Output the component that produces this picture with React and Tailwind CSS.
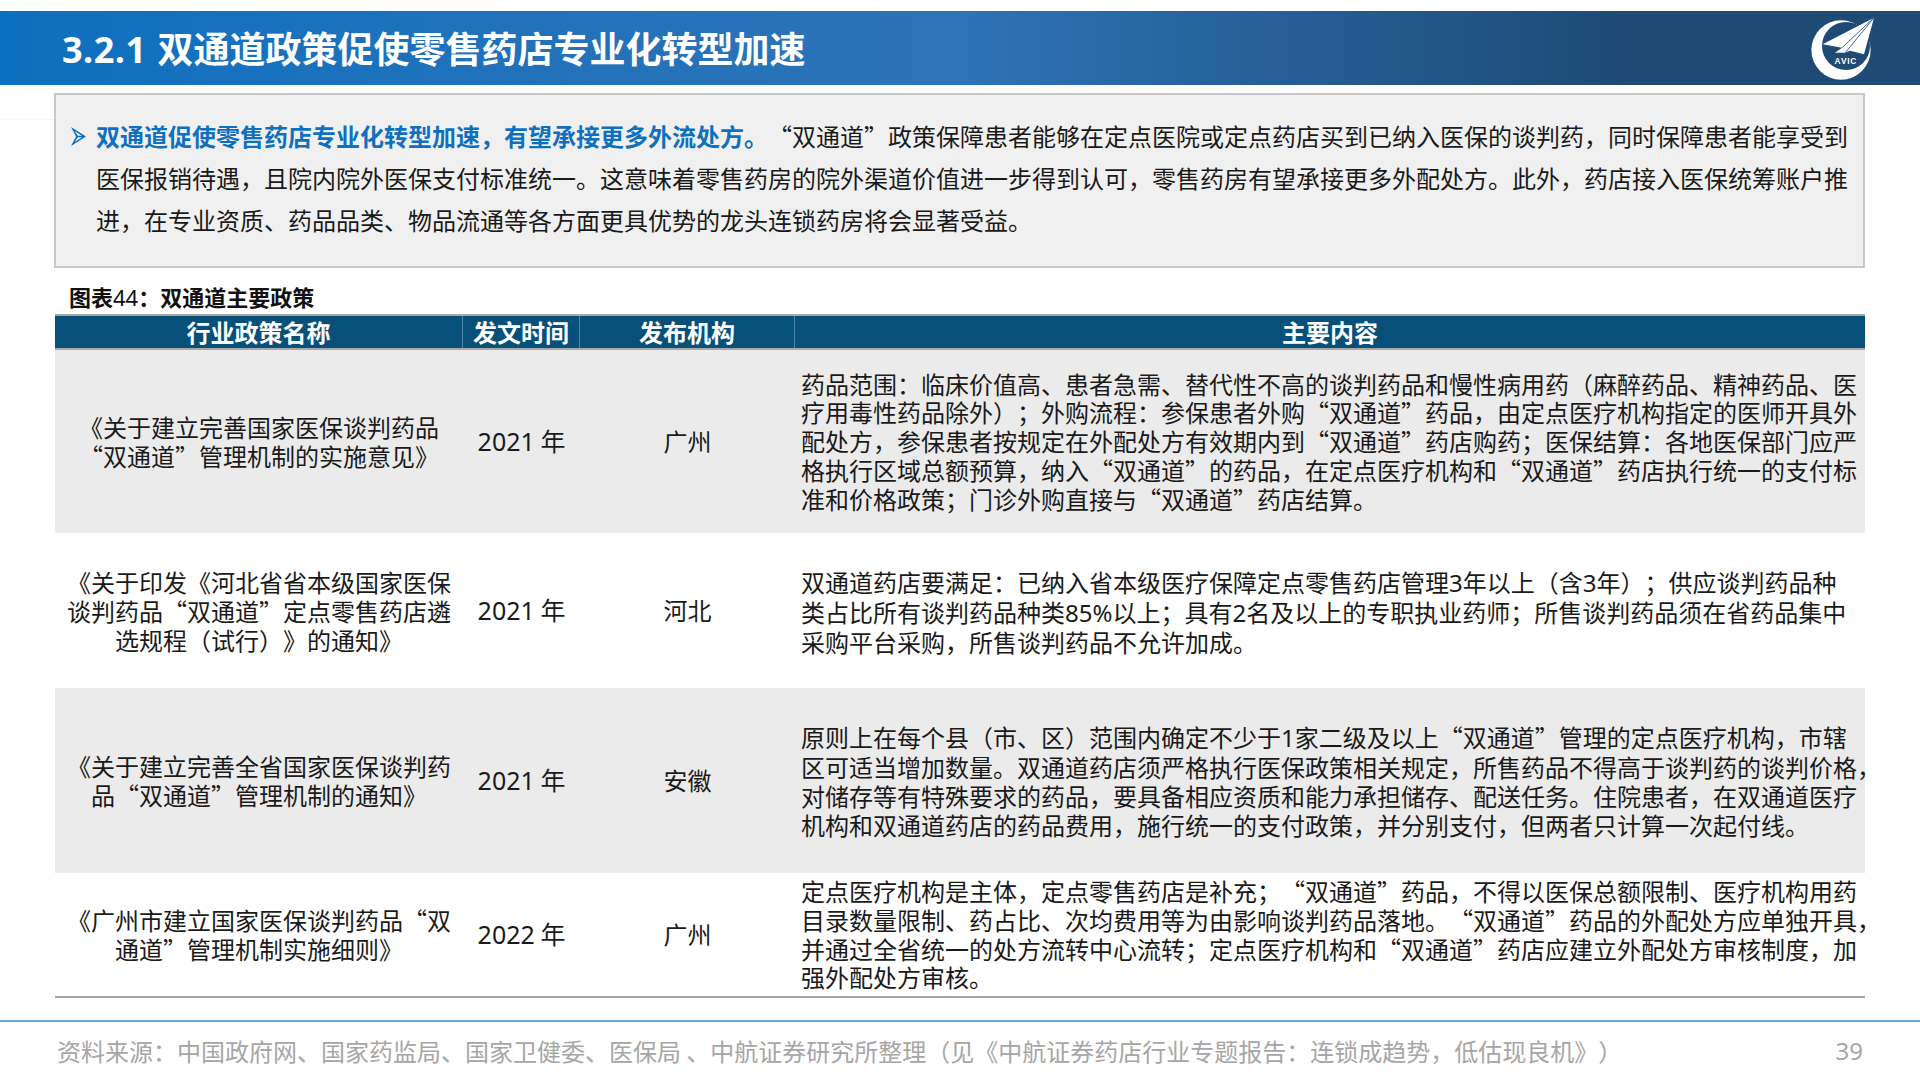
import React from 'react'

const rows = [
  {
    name: ['《关于建立完善国家医保谈判药品', '“双通道”管理机制的实施意见》'],
    nameClass: 'pb-[1px]',
    contentClass: '',
    year: '2021 年',
    org: '广州',
    height: 'h-[183px] bg-[#ebebeb]',
    content: [
      '药品范围：临床价值高、患者急需、替代性不高的谈判药品和慢性病用药（麻醉药品、精神药品、医',
      '疗用毒性药品除外）；外购流程：参保患者外购“双通道”药品，由定点医疗机构指定的医师开具外',
      '配处方，参保患者按规定在外配处方有效期内到“双通道”药店购药；医保结算：各地医保部门应严',
      '格执行区域总额预算，纳入“双通道”的药品，在定点医疗机构和“双通道”药店执行统一的支付标',
      '准和价格政策；门诊外购直接与“双通道”药店结算。',
    ],
  },
  {
    name: ['《关于印发《河北省省本级国家医保', '谈判药品“双通道”定点零售药店遴', '选规程（试行）》的通知》'],
    nameClass: '',
    contentClass: 'pt-[4px]',
    year: '2021 年',
    org: '河北',
    height: 'h-[155px] bg-white',
    content: [
      '双通道药店要满足：已纳入省本级医疗保障定点零售药店管理3年以上（含3年）；供应谈判药品种',
      '类占比所有谈判药品种类85%以上；具有2名及以上的专职执业药师；所售谈判药品须在省药品集中',
      '采购平台采购，所售谈判药品不允许加成。',
    ],
  },
  {
    name: ['《关于建立完善全省国家医保谈判药', '品“双通道”管理机制的通知》'],
    nameClass: 'pb-[1px]',
    contentClass: 'pt-[2px]',
    year: '2021 年',
    org: '安徽',
    height: 'h-[185px] bg-[#ebebeb]',
    content: [
      '原则上在每个县（市、区）范围内确定不少于1家二级及以上“双通道”管理的定点医疗机构，市辖',
      '区可适当增加数量。双通道药店须严格执行医保政策相关规定，所售药品不得高于谈判药的谈判价格，',
      '对储存等有特殊要求的药品，要具备相应资质和能力承担储存、配送任务。住院患者，在双通道医疗',
      '机构和双通道药店的药品费用，施行统一的支付政策，并分别支付，但两者只计算一次起付线。',
    ],
  },
  {
    name: ['《广州市建立国家医保谈判药品“双', '通道”管理机制实施细则》'],
    nameClass: 'pb-[1px]',
    contentClass: '',
    year: '2022 年',
    org: '广州',
    height: 'h-[125px] bg-white border-b-2 border-[#a6a6a6]',
    content: [
      '定点医疗机构是主体，定点零售药店是补充；“双通道”药品，不得以医保总额限制、医疗机构用药',
      '目录数量限制、药占比、次均费用等为由影响谈判药品落地。“双通道”药品的外配处方应单独开具，',
      '并通过全省统一的处方流转中心流转；定点医疗机构和“双通道”药店应建立外配处方审核制度，加',
      '强外配处方审核。',
    ],
  },
]

const columns = 'grid grid-cols-[408px_117px_215px_1070px]'

// latin digits sit in Noto Sans, the CJK font has narrower ones
const Mixed = ({ text }) =>
  text.split(/([0-9.%]+)/).map((part, i) =>
    /[0-9]/.test(part) ? (
      <span key={i} className="font-['Noto_Sans']">{part}</span>
    ) : (
      part
    )
  )

const Logo = () => (
  <svg viewBox="930 45 195 195" className="mr-[45px] h-[65px] w-[65px] shrink-0">
    <circle cx="1023" cy="147" r="89" fill="#fff" />
    <circle cx="1038" cy="135" r="72" fill="#1e4a74" />
    <path d="M1122 50 L968 130 L1026 140 L1005 155 L1035 155 L1050 149 L1092 160 Z" fill="#fff" />
    <path d="M1122 50 L1026 140 M1122 50 L1036 155" stroke="#1e4a74" strokeWidth="2.5" fill="none" />
    <text x="1037" y="189" textAnchor="middle" fontSize="25" fontWeight="700" letterSpacing="2" fill="#fff" fontFamily="Liberation Sans, sans-serif">
      AVIC
    </text>
  </svg>
)

const Bullet = () => (
  <svg viewBox="0 0 15 19" className="h-[19px] w-[15px] shrink-0">
    <path d="M0 0 L15 9.5 L0 19 L5 9.5 Z M3.6 4 L6.8 8.8 L11 8.8 Z M3.6 15 L6.8 10.2 L11 10.2 Z" fill="#0f70bf" fillRule="evenodd" />
  </svg>
)

export default function App() {
  return (
    <div className="flex h-[1080px] w-[1920px] flex-col overflow-hidden bg-white pt-[11px] font-['Noto_Sans_CJK_SC','Noto_Sans',sans-serif] text-[24px] leading-[29px] text-[#1a1a1a] [text-spacing-trim:space-all] [font-kerning:none]">
      {/* Title bar */}
      <div className="flex h-[74px] items-center justify-between bg-linear-to-r from-[#0b70bf] via-[#2d73b7] via-50% to-[#1e4a74] to-85% pl-[62px]">
        <h1 className="text-[36px] font-bold leading-[44px] whitespace-nowrap text-white">
          <span className="mr-[1px] font-['Noto_Sans'] tracking-[0.5px]">3.2.1 </span>双通道政策促使零售药店专业化转型加速
        </h1>
        <Logo />
      </div>

      {/* Summary box */}
      <div className="mt-[8px] flex">
        <div className="mt-[26px] h-px w-[54px] bg-[#f3f5fc]" />
        <div className="flex h-[175px] w-[1811px] flex-col justify-center border-2 border-[#c8c8c8] bg-[#f0f0f0] pr-2 pb-[5px] pl-[15px] leading-[41.8px]">
          <div className="flex items-center gap-[10px] whitespace-nowrap">
            <Bullet />
            <div>
              <span className="font-bold text-[#0f70bf]">双通道促使零售药店专业化转型加速，有望承接更多外流处方。</span>
              “双通道”政策保障患者能够在定点医院或定点药店买到已纳入医保的谈判药，同时保障患者能享受到
            </div>
          </div>
          <div className="pl-[25px] whitespace-nowrap">医保报销待遇，且院内院外医保支付标准统一。这意味着零售药房的院外渠道价值进一步得到认可，零售药房有望承接更多外配处方。此外，药店接入医保统筹账户推</div>
          <div className="pl-[25px] whitespace-nowrap">进，在专业资质、药品品类、物品流通等各方面更具优势的龙头连锁药房将会显著受益。</div>
        </div>
      </div>

      {/* Table caption */}
      <div className="mt-[13px] h-[33px] pl-[69px] text-[22px] leading-[30px] font-bold text-[#111]">
        图表<span className="font-['Noto_Sans'] font-normal">44</span>：双通道主要政策
      </div>

      {/* Policy table */}
      <div className="ml-[55px] w-[1810px]">
        <div className={`${columns} h-[36px] border-y-2 border-[#a8a8a8] bg-[#07507a] leading-[31px] font-bold text-white`}>
          <div className="border-r border-[#4d86a8] text-center">行业政策名称</div>
          <div className="border-r border-[#4d86a8] text-center">发文时间</div>
          <div className="border-r border-[#4d86a8] text-center">发布机构</div>
          <div className="text-center">主要内容</div>
        </div>
        {rows.map((row, i) => (
          <div key={i} className={`${columns} ${row.height} items-center`}>
            <div className={`${row.nameClass} text-center whitespace-nowrap`}>
              {row.name.map((line) => (
                <div key={line}>{line}</div>
              ))}
            </div>
            <div className="pb-[2px] text-center text-[25px] whitespace-nowrap">
              <Mixed text={row.year} />
            </div>
            <div className="pb-[2px] text-center">{row.org}</div>
            <div className={`${row.contentClass} pl-[6px] leading-[28.8px] whitespace-nowrap`}>
              {row.content.map((line) => (
                <div key={line}>
                  <Mixed text={line} />
                </div>
              ))}
            </div>
          </div>
        ))}
      </div>

      {/* Source line */}
      <div className="mt-[22px] flex flex-1 items-start justify-between border-t-2 border-[#6ea6dc] pt-[14px] pr-[57px] pl-[57px] leading-[30px] text-[#a6a6a6]">
        <div className="whitespace-nowrap">资料来源：中国政府网、国家药监局、国家卫健委、医保局 、中航证券研究所整理（见《中航证券药店行业专题报告：连锁成趋势，低估现良机》）</div>
        <div className="font-['Noto_Sans']">39</div>
      </div>
    </div>
  )
}
